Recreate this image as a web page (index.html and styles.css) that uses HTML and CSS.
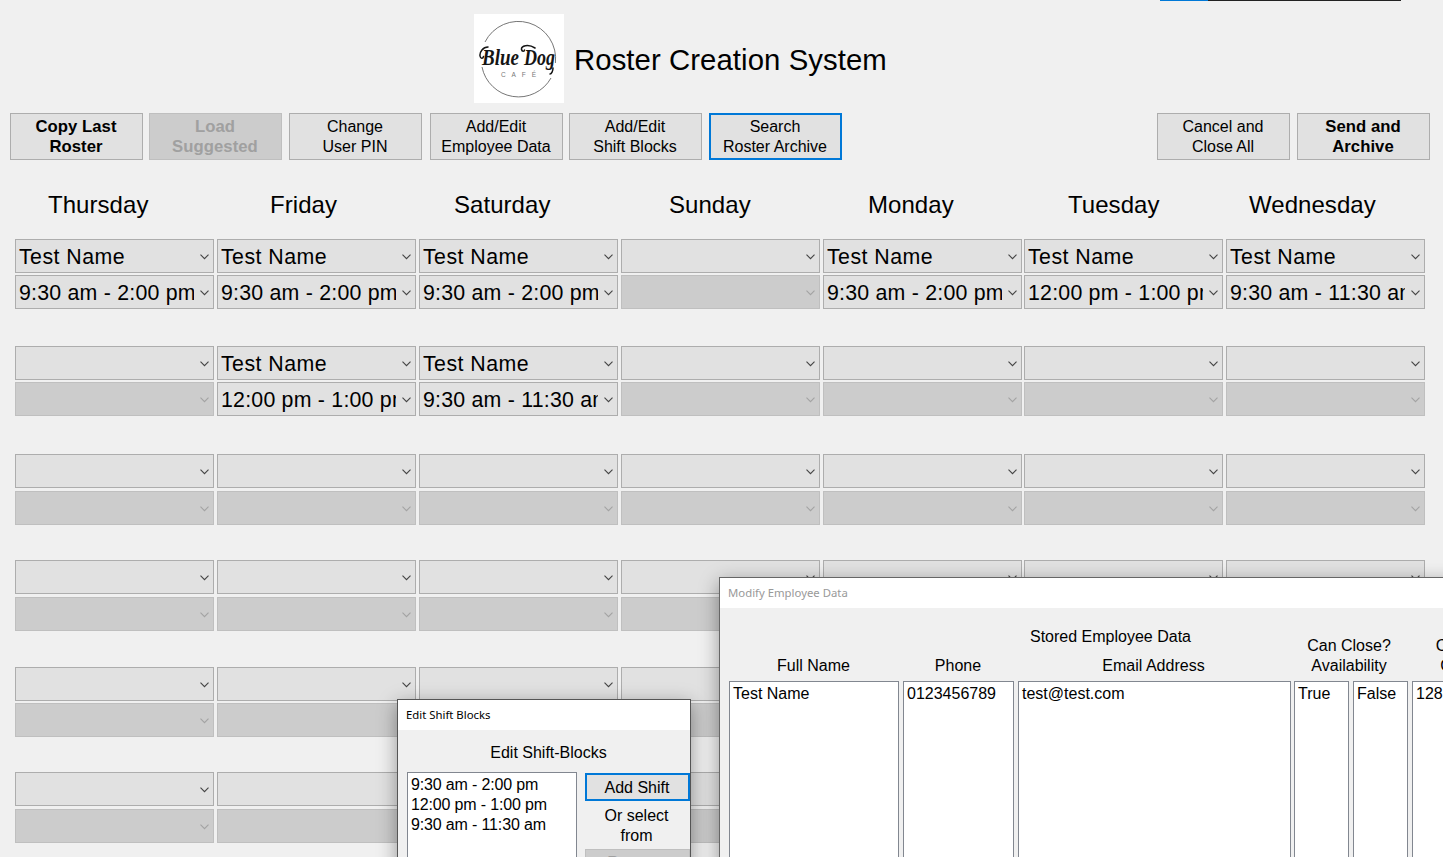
FILE: index.html
```html
<!DOCTYPE html>
<html lang="en">
<head>
<meta charset="utf-8">
<title>Roster Creation System</title>
<link rel="stylesheet" href="styles.css">
</head>
<body>
<div class="app">
  <div class="edge"><i class="edge-blue"></i><i class="edge-dark"></i></div>
  <header class="brand">
    <svg class="logo" width="90" height="89" viewBox="0 0 90 89">
      <rect width="90" height="89" fill="#fff"/>
      <path d="M11 28A37.300 37.300 0 0 1 81.400 49" fill="none" stroke="#666" stroke-width=".9"/>
      <path d="M77 64A37.300 37.300 0 0 1 8 53" fill="none" stroke="#666" stroke-width=".9"/>
      <text class="script" x="8" y="51" textLength="37" lengthAdjust="spacingAndGlyphs">Blue</text>
      <text class="script" x="50" y="51" textLength="31" lengthAdjust="spacingAndGlyphs">Dog</text>
      <path d="M14 33C9 33 5.500 38 6 42C6.500 45 9 45 9.500 42.500M61 34C54 29.500 47 32 47.500 35.500C48 38 50.500 37.500 50.500 36M79 54C79 57 77.500 60 76 60" fill="none" stroke="#151515" stroke-width="1.500" stroke-linecap="round"/>
      <text class="cafe" x="27" y="63" textLength="35">CAFÉ</text>
    </svg>
    <h1>Roster Creation System</h1>
  </header>
  <nav class="toolbar">
    <button class="btn strong">Copy Last<br>Roster</button>
    <button class="btn strong" disabled>Load<br>Suggested</button>
    <button class="btn g7">Change<br>User PIN</button>
    <button class="btn g8">Add/Edit<br>Employee Data</button>
    <button class="btn">Add/Edit<br>Shift Blocks</button>
    <button class="btn g7 focus">Search<br>Roster Archive</button>
    <button class="btn push">Cancel and<br>Close All</button>
    <button class="btn g7 strong">Send and<br>Archive</button>
  </nav>
  <div class="days"><span>Thursday</span><span>Friday</span><span>Saturday</span><span>Sunday</span><span>Monday</span><span>Tuesday</span><span>Wednesday</span></div>
  <main>
    <section class="shift r1">
      <div class="combo"><span>Test Name</span></div><div class="combo"><span>Test Name</span></div><div class="combo"><span>Test Name</span></div><div class="combo"></div><div class="combo"><span>Test Name</span></div><div class="combo"><span>Test Name</span></div><div class="combo"><span>Test Name</span></div>
      <div class="combo"><span class="time">9:30 am - 2:00 pm</span></div><div class="combo"><span class="time">9:30 am - 2:00 pm</span></div><div class="combo"><span class="time">9:30 am - 2:00 pm</span></div><div class="combo off"></div><div class="combo"><span class="time">9:30 am - 2:00 pm</span></div><div class="combo"><span class="time">12:00 pm - 1:00 pm</span></div><div class="combo"><span class="time">9:30 am - 11:30 am</span></div>
    </section>
    <section class="shift r2">
      <div class="combo"></div><div class="combo"><span>Test Name</span></div><div class="combo"><span>Test Name</span></div><div class="combo"></div><div class="combo"></div><div class="combo"></div><div class="combo"></div>
      <div class="combo off"></div><div class="combo"><span class="time">12:00 pm - 1:00 pm</span></div><div class="combo"><span class="time">9:30 am - 11:30 am</span></div><div class="combo off"></div><div class="combo off"></div><div class="combo off"></div><div class="combo off"></div>
    </section>
    <section class="shift r3">
      <div class="combo"></div><div class="combo"></div><div class="combo"></div><div class="combo"></div><div class="combo"></div><div class="combo"></div><div class="combo"></div>
      <div class="combo off"></div><div class="combo off"></div><div class="combo off"></div><div class="combo off"></div><div class="combo off"></div><div class="combo off"></div><div class="combo off"></div>
    </section>
    <section class="shift r4">
      <div class="combo"></div><div class="combo"></div><div class="combo"></div><div class="combo"></div><div class="combo"></div><div class="combo"></div><div class="combo"></div>
      <div class="combo off"></div><div class="combo off"></div><div class="combo off"></div><div class="combo off"></div><div class="combo off"></div><div class="combo off"></div><div class="combo off"></div>
    </section>
    <section class="shift r5">
      <div class="combo"></div><div class="combo"></div><div class="combo"></div><div class="combo"></div><div class="combo"></div><div class="combo"></div><div class="combo"></div>
      <div class="combo off"></div><div class="combo off"></div><div class="combo off"></div><div class="combo off"></div><div class="combo off"></div><div class="combo off"></div><div class="combo off"></div>
    </section>
    <section class="shift r6">
      <div class="combo"></div><div class="combo"></div><div class="combo"></div><div class="combo"></div><div class="combo"></div><div class="combo"></div><div class="combo"></div>
      <div class="combo off"></div><div class="combo off"></div><div class="combo off"></div><div class="combo off"></div><div class="combo off"></div><div class="combo off"></div><div class="combo off"></div>
    </section>
  </main>

  <div class="window employees">
    <div class="titlebar inactive"><span>Modify Employee Data</span></div>
    <div class="stored">Stored Employee Data</div>
    <div class="table">
      <div class="th">Full Name</div><div class="th">Phone</div><div class="th">Email Address</div><div class="th wide">Can Close?<br>Availability</div><div class="th last">Current<br>Grade</div>
      <div class="list">Test Name</div><div class="list">0123456789</div><div class="list mail">test@test.com</div><div class="list">True</div><div class="list">False</div><div class="list">128</div>
    </div>
  </div>

  <div class="window shifts">
    <div class="titlebar"><span>Edit Shift Blocks</span></div>
    <div class="caption">Edit Shift-Blocks</div>
    <div class="editor">
      <div class="list">9:30 am - 2:00 pm<br>12:00 pm - 1:00 pm<br>9:30 am - 11:30 am</div>
      <div class="actions">
        <button class="btn focus add">Add Shift</button>
        <div class="hint">Or select<br>from</div>
        <button class="btn remove" disabled>Remove</button>
      </div>
    </div>
  </div>
</div>
</body>
</html>
```

FILE: styles.css
```css
* { box-sizing: border-box; }
body { margin: 0; background: #f0f0f0; color: #000; font: 16px/20px "Liberation Sans", Arial, sans-serif; }
.app { position: relative; width: 1443px; height: 857px; overflow: hidden; }

.edge { display: flex; height: 1px; padding-left: 1160px; }
.edge-blue { width: 48px; background: #0078d7; }
.edge-dark { width: 193px; background: #222; }

.brand { display: flex; align-items: center; gap: 10px; height: 89px; margin-top: 13px; padding-left: 474px; }
.logo { display: block; flex: none; }
.script { font: italic bold 24px "Liberation Serif", serif; fill: #151515; }
.cafe { font: 6.500px "Liberation Sans", sans-serif; fill: #777; }
h1 { margin: 2px 0 0; font-size: 29.330px; font-weight: 400; line-height: 36px; letter-spacing: .07px; white-space: nowrap; }

.toolbar { display: flex; margin-top: 10px; padding: 0 13px 0 10px; }
.btn { flex: none; width: 133px; height: 47px; padding: 0 1px 0 0; border: 1px solid #adadad; background: #e1e1e1; color: #000; font: inherit; text-align: center; }
.toolbar .btn + .btn { margin-left: 6px; }
.toolbar .btn.g7 { margin-left: 7px; }
.toolbar .btn.g8 { margin-left: 8px; }
.toolbar .btn.push { margin-left: auto; }
.btn.strong { font-size: 16.700px; font-weight: 700; letter-spacing: .05px; }
.btn.focus { border: 2px solid #0078d7; }
.btn:disabled { border-color: #bfbfbf; background: #ccc; color: #a0a0a0; }

.days { display: grid; grid-template-columns: 222px 184px 215px 199px 200px 181px 1fr; height: 79px; padding: 30px 0 0 48px; font-size: 24px; line-height: 30px; letter-spacing: .05px; }

.shift { display: grid; grid-template-columns: repeat(4, 202px) 201px 202px 199px; grid-template-rows: 34px 34px; row-gap: 2px; padding-left: 15px; }
.r1 { height: 107px; }
.r2 { height: 108px; }
.r3 { height: 106px; row-gap: 3px; }
.r4 { height: 107px; row-gap: 3px; }
.r5 { height: 105px; }
.r6 { row-gap: 3px; }
.combo { width: 199px; height: 34px; padding-left: 3px; border: 1px solid #adadad; background: #e1e1e1 url("data:image/svg+xml,%3Csvg xmlns='http://www.w3.org/2000/svg' width='9' height='6'%3E%3Cpath d='M.5 .7L4.500 4.700L8.500 .7' fill='none' stroke='%23444' stroke-width='1.100'/%3E%3C/svg%3E") no-repeat 184px 14px; }
.combo.off { border-color: #bfbfbf; background-color: #ccc; background-image: url("data:image/svg+xml,%3Csvg xmlns='http://www.w3.org/2000/svg' width='9' height='6'%3E%3Cpath d='M.5 .7L4.500 4.700L8.500 .7' fill='none' stroke='%23a3a3a3' stroke-width='1.100'/%3E%3C/svg%3E"); }
.combo span { display: block; width: 175px; overflow: hidden; white-space: nowrap; font-size: 21.330px; line-height: 34px; letter-spacing: .45px; }
.combo .time { letter-spacing: .22px; }

.window { position: absolute; border: 1px solid #666; background: #f0f0f0; box-shadow: 0 5px 18px rgba(0, 0, 0, .38); }
.titlebar { height: 30px; padding-left: 8px; background: #fff; font: 12px/30px "Noto Sans", sans-serif; white-space: nowrap; }
.titlebar span { display: inline-block; font-size: 11.350px; }
.inactive { color: #999; }
.list { height: 300px; padding: 1px 3px; border: 1px solid #828790; background: #fff; white-space: nowrap; }

.employees { left: 719px; top: 577px; width: 850px; height: 400px; }
.stored { margin: 19px 0 0 310px; }
.table { display: grid; grid-template-columns: 174px 115px 276px 59px 59px 105px; grid-template-rows: 54px 300px; margin-top: -20px; padding-left: 9px; }
.table .th { align-self: end; padding: 0 5px 5px 0; text-align: center; white-space: nowrap; }
.table .th.wide { grid-column: span 2; padding-right: 8px; }
.table .th.last { padding-right: 4px; }
.table .list { margin-right: 4px; padding-top: 2px; }
.table .list.mail { margin-right: 3px; }

.shifts { left: 397px; top: 699px; width: 294px; height: 220px; border-color: #555; }
.caption { height: 42px; padding: 13px 0 0 9px; text-align: center; }
.editor { display: flex; gap: 8px; padding-left: 9px; }
.editor .list { width: 170px; padding-top: 2px; letter-spacing: -.15px; }
.actions { padding-top: 1px; }
.btn.add { display: block; width: 105px; height: 28px; padding-top: 1px; }
.hint { height: 48px; padding: 5px 2px 0 0; text-align: center; }
.btn.remove { display: block; width: 105px; height: 28px; }
```
